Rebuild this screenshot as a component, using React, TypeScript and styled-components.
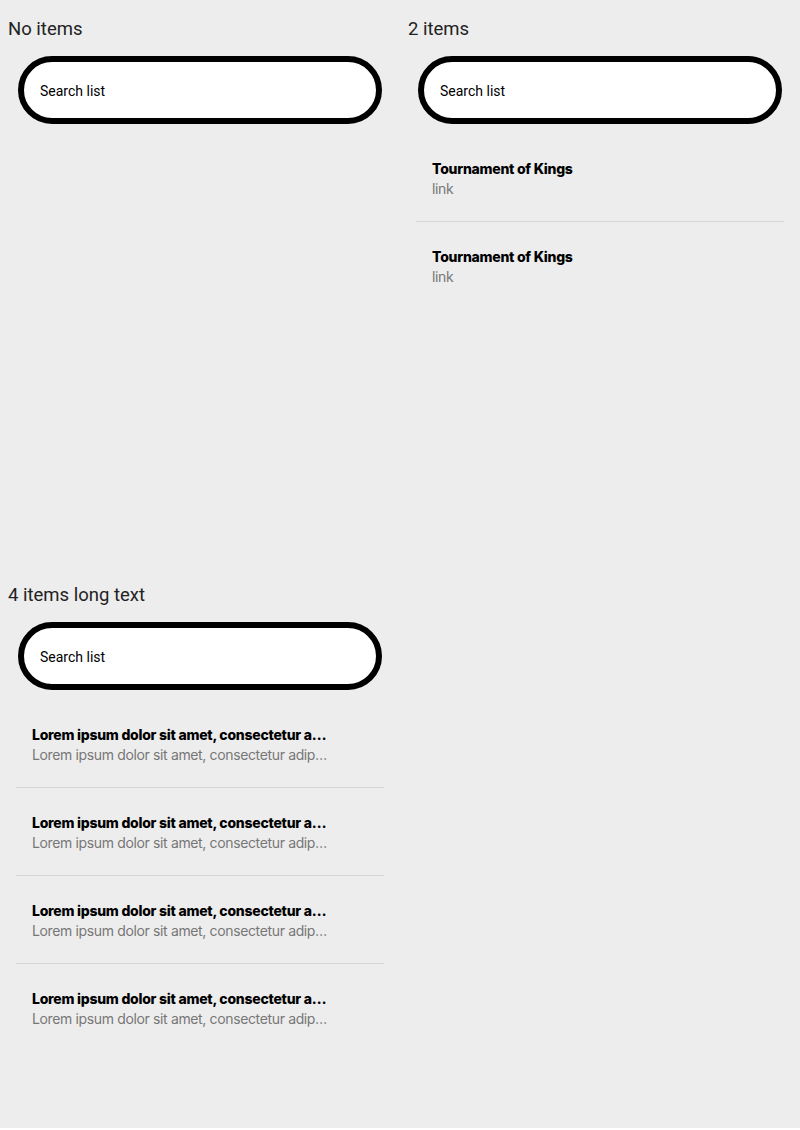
import React from "react";
import styled, { createGlobalStyle } from "styled-components";

const Global = createGlobalStyle`
  html, body { margin: 0; padding: 0; background: #ffffff; }
  body { font-family: Roboto, "Noto Sans", sans-serif; }
  * { box-sizing: border-box; }
`;

const Page = styled.div`
  display: grid;
  grid-template-columns: 400px 400px;
  grid-template-rows: 566px 562px;
  width: 800px;
  background: #ededed;
`;

const Cell = styled.section`
  padding: 8px;
  display: flex;
  flex-direction: column;
`;

const Heading = styled.h2`
  margin: 9px 0 15px 0;
  font-family: Roboto, sans-serif;
  font-weight: 400;
  font-size: 18.5px;
  line-height: 24px;
  color: #222;
`;

const SearchBox = styled.div`
  margin: 0 10px;
  height: 68px;
  border: 6px solid #000;
  border-radius: 34px;
  background: #fff;
  display: flex;
  align-items: center;
  padding: 2px 16px 0 16px;
`;

const SearchInput = styled.input`
  border: none;
  outline: none;
  background: transparent;
  width: 100%;
  font-family: Roboto, sans-serif;
  font-size: 14px;
  color: #000;
  padding: 0;
  &::placeholder { color: #000; opacity: 1; }
`;

const List = styled.ul`
  list-style: none;
  margin: 10px 8px 0 8px;
  padding: 0;
`;

const Item = styled.li`
  padding: 25px 56px 22px 16px;
  border-bottom: 1px solid #d6d6d6;
  &:last-child { border-bottom: none; }
`;

const ItemTitle = styled.div`
  font-family: Inter, sans-serif;
  font-weight: 800;
  font-size: 14px;
  line-height: 20px;
  color: #000;
  white-space: nowrap;
  overflow: hidden;
  text-overflow: ellipsis;
  letter-spacing: -0.25px;
`;

const ItemSub = styled.div`
  font-family: Inter, sans-serif;
  font-weight: 400;
  font-size: 14px;
  line-height: 20px;
  color: #777;
  white-space: nowrap;
  overflow: hidden;
  text-overflow: ellipsis;
  letter-spacing: -0.36px;
`;

type Entry = { title: string; sub: string };

const Section = ({ heading, items }: { heading: string; items: Entry[] }) => (
  <Cell>
    <Heading>{heading}</Heading>
    <SearchBox>
      <SearchInput placeholder="Search list" />
    </SearchBox>
    {items.length > 0 && (
      <List>
        {items.map((it, i) => (
          <Item key={i}>
            <ItemTitle>{it.title}</ItemTitle>
            <ItemSub>{it.sub}</ItemSub>
          </Item>
        ))}
      </List>
    )}
  </Cell>
);

const lorem = "Lorem ipsum dolor sit amet, consectetur adipiscing elit, sed do eiusmod tempor incididunt";

export default function App() {
  const two: Entry[] = [
    { title: "Tournament of Kings", sub: "link" },
    { title: "Tournament of Kings", sub: "link" },
  ];
  const four: Entry[] = Array.from({ length: 4 }, () => ({ title: lorem, sub: lorem }));
  return (
    <>
      <Global />
      <Page>
        <Section heading="No items" items={[]} />
        <Section heading="2 items" items={two} />
        <Section heading="4 items long text" items={four} />
        <Cell />
      </Page>
    </>
  );
}
